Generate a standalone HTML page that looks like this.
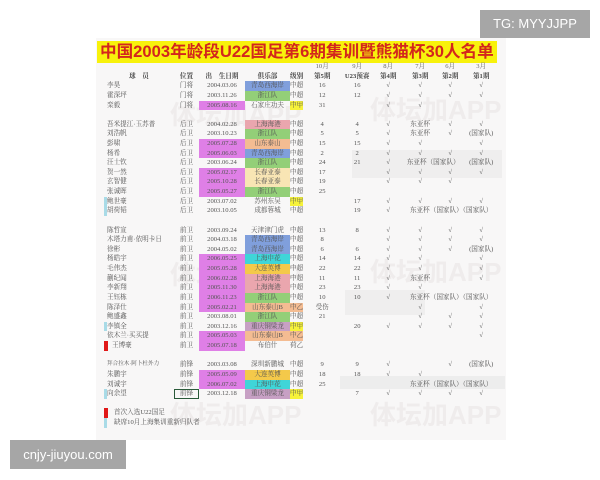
<!DOCTYPE html>
<html><head><meta charset="utf-8"><style>
*{margin:0;padding:0;box-sizing:border-box}
body{width:600px;height:480px;background:#fff;position:relative;overflow:hidden;font-family:"Liberation Serif","Noto Serif CJK SC",serif}
#img{position:absolute;left:96px;top:38px;width:410px;height:402px;background:#f8f7f7}
#title{position:absolute;left:97px;top:41px;width:400px;height:22px;background:#f8f20c;color:#d3261d;font:bold 16.6px "Liberation Sans","Noto Sans CJK SC",sans-serif;line-height:22px;padding-left:3px;white-space:nowrap}
.wm{position:absolute;color:rgba(200,190,190,.18);font:bold 26px "Liberation Sans","Noto Sans CJK SC",sans-serif;white-space:nowrap}
.gb{position:absolute;background:#e6e6e6}
table{position:absolute;left:104px;top:62px;border-collapse:collapse;table-layout:fixed;font-size:6.6px;color:#555}
td{height:9.62px;padding:0;text-align:center;white-space:nowrap;overflow:hidden;line-height:9.62px}
td.n{text-align:left;padding-left:3px}
.p{background:#df7fe6}
.bl{background:#809fdc}.gr{background:#93cf78}.pk{background:#eaa6ae}.or{background:#f4bc92}.cr{background:#f8e5b4}.cy{background:#3fd5d8}.yo{background:#f4c94a}.mv{background:#c7a0c4}
.y{background:#f6f23a}.o{background:#f4bc92}
.lbm{box-shadow:inset 3px 0 #a9dbe7}.rm{box-shadow:inset 4px 0 #e01818}
.hd td{font-weight:bold;color:#444}
#tg{position:absolute;left:480px;top:10px;width:110px;height:28px;background:#a6a6a6;color:#fff;font:13px "Liberation Sans",sans-serif;line-height:28px;text-align:center}
#cn{position:absolute;left:10px;top:440px;width:116px;height:29px;background:#a6a6a6;color:#fff;font:13px "Liberation Sans",sans-serif;line-height:29px;text-align:center}
</style></head><body>
<div id="img"></div>
<div class="gb" style="left:352px;top:150px;width:150px;height:28px;opacity:.5"></div>
<div class="gb" style="left:345px;top:290px;width:80px;height:25px;opacity:.5"></div>
<div class="gb" style="left:340px;top:376px;width:165px;height:13px;opacity:.6"></div>
<div class="wm" style="left:170px;top:95px">体坛加APP</div>
<div class="wm" style="left:370px;top:90px">体坛加APP</div>
<div class="wm" style="left:170px;top:255px">体坛加APP</div>
<div class="wm" style="left:370px;top:252px">体坛加APP</div>
<div class="wm" style="left:170px;top:395px">体坛加APP</div>
<div class="wm" style="left:370px;top:395px">体坛加APP</div>
<div id="title">中国2003年龄段U22国足第6期集训暨熊猫杯30人名单</div>
<table>
<colgroup><col style="width:70px"><col style="width:25px"><col style="width:46px"><col style="width:45px"><col style="width:12px"><col style="width:38px"><col style="width:32px"><col style="width:30px"><col style="width:34px"><col style="width:26px"><col style="width:36px"></colgroup>
<tr style="color:#666"><td></td><td></td><td></td><td></td><td></td><td>10月</td><td>9月</td><td>8月</td><td>7月</td><td>6月</td><td>3月</td></tr>
<tr class="hd"><td>球　员</td><td>位置</td><td>出　生日期</td><td>俱乐部</td><td>级别</td><td>第5期</td><td>U23预赛</td><td>第4期</td><td>第3期</td><td>第2期</td><td>第1期</td></tr>
<tr><td class="n">李昊</td><td>门将</td><td>2004.03.06</td><td class="bl">青岛西海岸</td><td>中超</td><td>16</td><td>16</td><td>√</td><td>√</td><td>√</td><td>√</td></tr>
<tr><td class="n">霍深坪</td><td>门将</td><td>2003.11.26</td><td class="gr">浙江队</td><td>中超</td><td>12</td><td>12</td><td>√</td><td>√</td><td>√</td><td>√</td></tr>
<tr><td class="n">栾毅</td><td>门将</td><td class="p">2005.08.16</td><td>石家庄功夫</td><td class="y">中甲</td><td>31</td><td></td><td>√</td><td>√</td><td></td><td></td></tr>
<tr><td colspan="11"></td></tr>
<tr><td class="n">吾米提江·玉苏普</td><td>后卫</td><td>2004.02.28</td><td class="pk">上海海港</td><td>中超</td><td>4</td><td>4</td><td>√</td><td>东亚杯</td><td>√</td><td>√</td></tr>
<tr><td class="n">刘浩帆</td><td>后卫</td><td>2003.10.23</td><td class="gr">浙江队</td><td>中超</td><td>5</td><td>5</td><td>√</td><td>东亚杯</td><td>√</td><td>(国家队)</td></tr>
<tr><td class="n">彭啸</td><td>后卫</td><td class="p">2005.07.28</td><td class="or">山东泰山</td><td>中超</td><td>15</td><td>15</td><td>√</td><td>√</td><td></td><td>√</td></tr>
<tr><td class="n">杨希</td><td>后卫</td><td class="p">2005.06.03</td><td class="bl">青岛西海岸</td><td>中超</td><td>2</td><td>2</td><td>√</td><td>√</td><td>√</td><td>√</td></tr>
<tr><td class="n">汪士钦</td><td>后卫</td><td>2003.06.24</td><td class="gr">浙江队</td><td>中超</td><td>24</td><td>21</td><td>√</td><td colspan="2">东亚杯（国家队）</td><td>(国家队)</td></tr>
<tr><td class="n">贺一然</td><td>后卫</td><td class="p">2005.02.17</td><td class="cr">长春亚泰</td><td>中超</td><td>17</td><td></td><td>√</td><td>√</td><td>√</td><td>√</td></tr>
<tr><td class="n">玄智健</td><td>后卫</td><td class="p">2005.10.28</td><td class="cr">长春亚泰</td><td>中超</td><td>19</td><td></td><td>√</td><td>√</td><td>√</td><td></td></tr>
<tr><td class="n">张诚晖</td><td>后卫</td><td class="p">2005.05.27</td><td class="gr">浙江队</td><td>中超</td><td>25</td><td></td><td></td><td></td><td></td><td></td></tr>
<tr><td class="n lbm">鲍世豪</td><td>后卫</td><td>2003.07.02</td><td>苏州东吴</td><td class="y">中甲</td><td></td><td>17</td><td>√</td><td>√</td><td>√</td><td>√</td></tr>
<tr><td class="n lbm">胡荷韬</td><td>后卫</td><td>2003.10.05</td><td>成都蓉城</td><td>中超</td><td></td><td>19</td><td>√</td><td colspan="3">东亚杯（国家队）（国家队）</td></tr>
<tr><td colspan="11"></td></tr>
<tr><td class="n">陈哲宣</td><td>前卫</td><td>2003.09.24</td><td>天津津门虎</td><td>中超</td><td>13</td><td>8</td><td>√</td><td>√</td><td>√</td><td>√</td></tr>
<tr><td class="n">木塔力甫·依明卡日</td><td>前卫</td><td>2004.03.18</td><td class="bl">青岛西海岸</td><td>中超</td><td>8</td><td></td><td>√</td><td>√</td><td>√</td><td>√</td></tr>
<tr><td class="n">徐彬</td><td>前卫</td><td>2004.05.02</td><td class="bl">青岛西海岸</td><td>中超</td><td>6</td><td>6</td><td>√</td><td>√</td><td>√</td><td>(国家队)</td></tr>
<tr><td class="n">杨皓宇</td><td>前卫</td><td class="p">2006.05.25</td><td class="cy">上海申花</td><td>中超</td><td>14</td><td>14</td><td>√</td><td>√</td><td></td><td>√</td></tr>
<tr><td class="n">毛伟杰</td><td>前卫</td><td class="p">2005.05.28</td><td class="yo">大连英博</td><td>中超</td><td>22</td><td>22</td><td>√</td><td>√</td><td></td><td>√</td></tr>
<tr><td class="n">蒯纪闻</td><td>前卫</td><td class="p">2006.02.28</td><td class="pk">上海海港</td><td>中超</td><td>11</td><td>11</td><td>√</td><td>东亚杯</td><td></td><td>√</td></tr>
<tr><td class="n">李新翔</td><td>前卫</td><td class="p">2005.11.30</td><td class="pk">上海海港</td><td>中超</td><td>23</td><td>23</td><td>√</td><td>√</td><td></td><td></td></tr>
<tr><td class="n">王钰栋</td><td>前卫</td><td class="p">2006.11.23</td><td class="gr">浙江队</td><td>中超</td><td>10</td><td>10</td><td>√</td><td colspan="3">东亚杯（国家队）（国家队）</td></tr>
<tr><td class="n">陈泽仕</td><td>前卫</td><td class="p">2005.02.21</td><td class="or">山东泰山B</td><td class="o">中乙</td><td>受伤</td><td></td><td></td><td>√</td><td></td><td>√</td></tr>
<tr><td class="n">鲍盛鑫</td><td>前卫</td><td>2003.08.01</td><td class="gr">浙江队</td><td>中超</td><td>21</td><td></td><td></td><td>√</td><td>√</td><td>√</td></tr>
<tr><td class="n lbm">李镇全</td><td>前卫</td><td>2003.12.16</td><td class="mv">重庆铜梁龙</td><td class="y">中甲</td><td></td><td>20</td><td>√</td><td>√</td><td>√</td><td>√</td></tr>
<tr><td class="n">依木兰·买买提</td><td>前卫</td><td class="p">2005.05.03</td><td class="or">山东泰山B</td><td class="o">中乙</td><td></td><td></td><td></td><td></td><td></td><td>√</td></tr>
<tr><td class="n rm" style="padding-left:8px">王博豪</td><td>前卫</td><td class="p">2005.07.18</td><td>布伯什</td><td>荷乙</td><td></td><td></td><td></td><td></td><td></td><td></td></tr>
<tr><td colspan="11"></td></tr>
<tr><td class="n" style="font-size:5.6px">拜合拉木·阿卜杜外力</td><td>前锋</td><td>2003.03.08</td><td>深圳新鹏城</td><td>中超</td><td>9</td><td>9</td><td>√</td><td></td><td>√</td><td>(国家队)</td></tr>
<tr><td class="n">朱鹏宇</td><td>前锋</td><td class="p">2005.05.09</td><td class="yo">大连英博</td><td>中超</td><td>18</td><td>18</td><td>√</td><td>√</td><td></td><td></td></tr>
<tr><td class="n">刘诚宇</td><td>前锋</td><td class="p">2006.07.02</td><td class="cy">上海申花</td><td>中超</td><td>25</td><td></td><td></td><td colspan="3">东亚杯（国家队）（国家队）</td></tr>
<tr><td class="n lbm">向余望</td><td style="outline:1px solid #2a5a3a;outline-offset:-1px">前锋</td><td>2003.12.18</td><td class="mv">重庆铜梁龙</td><td class="y">中甲</td><td></td><td>7</td><td>√</td><td>√</td><td>√</td><td>√</td></tr>
<tr><td colspan="11"></td></tr>
<tr><td class="n rm" style="padding-left:10px" colspan="3">首次入选U22国足</td><td colspan="8"></td></tr>
<tr><td class="n lbm" style="padding-left:10px" colspan="3">缺席10月上海集训重新归队者</td><td colspan="8"></td></tr>
</table>
<div id="tg">TG: MYYJJPP</div>
<div id="cn">cnjy-jiuyou.com</div>
</body></html>
